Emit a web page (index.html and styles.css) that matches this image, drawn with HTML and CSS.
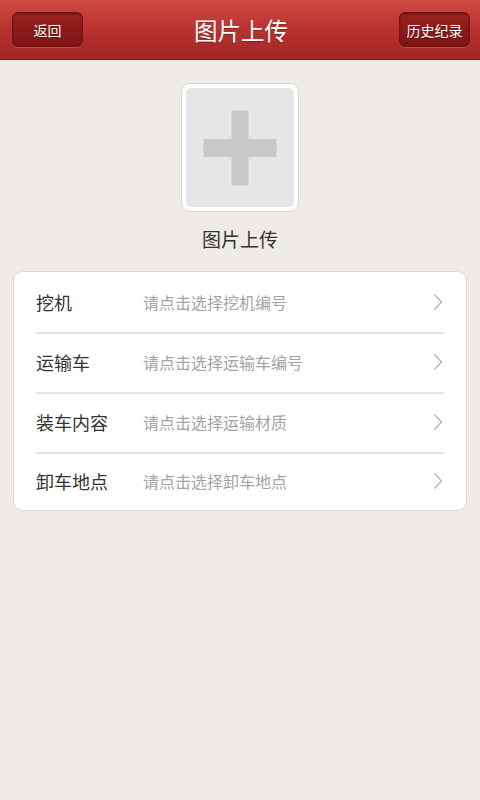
FILE: index.html
```html
<!DOCTYPE html>
<html lang="zh-CN">
<head>
  <meta charset="UTF-8">
  <meta name="viewport" content="width=device-width, initial-scale=1.0">
  <title>图片上传</title>
  <link rel="stylesheet" href="styles.css">
</head>
<body>
  <div class="header">
    <a class="btn">返回</a>
    <h1>图片上传</h1>
    <a class="btn">历史纪录</a>
  </div>

  <div class="upload">
    <div class="upload-box">
      <div class="plus"></div>
    </div>
    <div class="upload-label">图片上传</div>
  </div>

  <div class="card">
    <div class="row">
      <span class="label">挖机</span>
      <span class="hint">请点击选择挖机编号</span>
      <svg class="arrow" viewBox="0 0 10 18"><polyline points="1.5,1.5 8.5,9 1.5,16.5"/></svg>
    </div>
    <div class="line"></div>
    <div class="row">
      <span class="label">运输车</span>
      <span class="hint">请点击选择运输车编号</span>
      <svg class="arrow" viewBox="0 0 10 18"><polyline points="1.5,1.5 8.5,9 1.5,16.5"/></svg>
    </div>
    <div class="line"></div>
    <div class="row">
      <span class="label">装车内容</span>
      <span class="hint">请点击选择运输材质</span>
      <svg class="arrow" viewBox="0 0 10 18"><polyline points="1.5,1.5 8.5,9 1.5,16.5"/></svg>
    </div>
    <div class="line"></div>
    <div class="row last">
      <span class="label">卸车地点</span>
      <span class="hint">请点击选择卸车地点</span>
      <svg class="arrow" viewBox="0 0 10 18"><polyline points="1.5,1.5 8.5,9 1.5,16.5"/></svg>
    </div>
  </div>
</body>
</html>
```

FILE: styles.css
```css
body {
  margin: 0;
  background-color: #efece7;
  font-family: "Noto Sans CJK SC", "Noto Sans", sans-serif;
  color: #333;
}
.header {
  height: 59px;
  display: flex;
  align-items: center;
  justify-content: space-between;
  padding: 0 10px 0 12px;
  background: linear-gradient(#cf4a43, #b83330 50%, #a42624);
  border-bottom: 1px solid #7d1513;
  box-shadow: 0 1px 0 #f6e4de;
}
.header h1 {
  margin: 0;
  font-size: 23.5px;
  font-weight: normal;
  color: #fff;
  text-shadow: 0 1px 1px rgba(0, 0, 0, 0.3);
}
.btn {
  height: 35px;
  min-width: 71px;
  padding: 0 6px;
  box-sizing: border-box;
  display: flex;
  align-items: center;
  justify-content: center;
  font-size: 14px;
  color: #fff;
  background: linear-gradient(#9a2220, #7e1514);
  border: 1px solid #761311;
  border-radius: 6px;
  box-shadow: inset 0 1px 2px rgba(0, 0, 0, 0.35), 0 1px 0 rgba(255, 255, 255, 0.15);
  text-shadow: 0 1px 1px rgba(0, 0, 0, 0.4);
}
.upload {
  display: flex;
  flex-direction: column;
  align-items: center;
  padding-top: 23px;
}
.upload-box {
  width: 118px;
  height: 129px;
  box-sizing: border-box;
  padding: 4px;
  background: #fff;
  border: 1px solid #d6d4d2;
  border-radius: 9px;
}
.upload-box .plus {
  height: 100%;
  border-radius: 5px;
  background-color: #e6e5e8;
  position: relative;
}
.plus::before,
.plus::after {
  content: "";
  position: absolute;
  background-color: #c8c8c9;
  left: 50%;
  top: 50%;
  transform: translate(-50%, -50%);
}
.plus::before {
  width: 73px;
  height: 18px;
}
.plus::after {
  width: 17px;
  height: 75px;
}
.upload-label {
  margin-top: 13px;
  font-size: 19px;
  line-height: 28px;
  color: #333;
}
.card {
  margin: 18px 13px 0 13px;
  padding-top: 2px;
  background: #fff;
  border: 1px solid #dcdad7;
  border-radius: 10px;
}
.row {
  height: 58px;
  box-sizing: border-box;
  display: flex;
  align-items: center;
  padding: 0 22px 2px 22px;
}
.row.last {
  height: 56px;
}
.label {
  width: 107px;
  font-size: 18px;
  color: #333;
}
.hint {
  flex: 1;
  font-size: 16px;
  color: #a3a3a3;
}
.arrow {
  width: 10px;
  height: 18px;
  margin-right: 1px;
  fill: none;
  stroke: #b4b4b4;
  stroke-width: 1.4;
}
.line {
  height: 2px;
  margin: 0 22px;
  background-color: #e6e5e5;
}
```
